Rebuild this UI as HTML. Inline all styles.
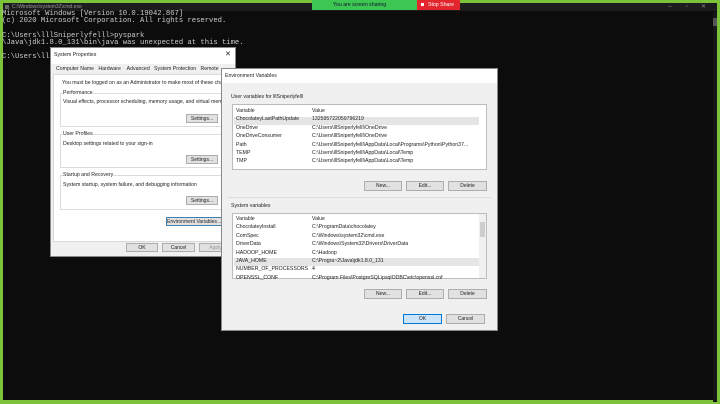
<!DOCTYPE html><html><head><style>
*{margin:0;padding:0;box-sizing:border-box}
body{width:720px;height:404px;overflow:hidden;background:#7cc23a;position:relative;font-family:"Liberation Sans",sans-serif}
.a{position:absolute}
.con{left:3px;top:3px;width:714px;height:397px;background:#0c0c0c}
.mono{font-family:"Liberation Mono",monospace;font-size:7.2px;color:#ccc;white-space:pre;line-height:7.2px}
.t{font-size:5.2px;color:#222;white-space:nowrap}
.btn{position:absolute;background:#e1e1e1;border:1px solid #adadad;font-size:5px;color:#222;text-align:center;white-space:nowrap;line-height:8px;overflow:hidden}
.box{position:absolute;border:1px solid #bcbcbc;background:#fff}
</style></head><body>
<div class="a con"></div>
<div class="a" style="left:3px;top:3px;width:714px;height:8px;background:#1d1d1d"></div>
<div class="a t" style="left:12px;top:4px;color:#999;font-size:5px">C:\Windows\system32\cmd.exe</div>
<div class="a" style="left:5px;top:5px;width:4px;height:4px;background:#666"></div>
<div class="a t" style="left:668px;top:3px;color:#888;font-size:6px">─&nbsp;&nbsp;&nbsp;&nbsp;&nbsp;&nbsp;&nbsp;&nbsp;▫&nbsp;&nbsp;&nbsp;&nbsp;&nbsp;&nbsp;&nbsp;&nbsp;✕</div>
<div class="a" style="left:312px;top:0;width:105px;height:10px;background:#3ec653"></div>
<div class="a t" style="left:333px;top:2px;color:#113;font-size:5.2px">You are screen sharing</div>
<div class="a" style="left:417px;top:0;width:43px;height:10px;background:#e3262e"></div>
<div class="a" style="left:421px;top:3px;width:3px;height:3px;background:#fff"></div>
<div class="a t" style="left:428px;top:2px;color:#fff;font-size:5.2px">Stop Share</div>
<div class="a" style="left:713px;top:12px;width:4px;height:390px;background:#171717"></div>
<div class="a" style="left:713px;top:18px;width:4px;height:8px;background:#555"></div>
<div class="a mono" style="left:2px;top:11px">Microsoft Windows [Version 10.0.19042.867]
(c) 2020 Microsoft Corporation. All rights reserved.

C:\Users\lllSniperlyfelll>pyspark
\Java\jdk1.8.0_131\bin\java was unexpected at this time.

C:\Users\lllSni</div>

<!-- system properties -->
<div class="a" style="left:50px;top:47px;width:186px;height:210px;background:#f0f0f0;border:1px solid #888"></div>
<div class="a" style="left:51px;top:48px;width:184px;height:16px;background:#fff"></div>
<div class="a t" style="left:54px;top:52px">System Properties</div>
<div class="a t" style="left:225px;top:50px;font-size:7px">✕</div>
<div class="a" style="left:53px;top:74px;width:182px;height:168px;background:#fff;border:1px solid #d9d9d9"></div>
<div class="a t" style="left:56px;top:66px;width:178px">Computer Name&nbsp;&nbsp;&nbsp;Hardware&nbsp;&nbsp;&nbsp;&nbsp;Advanced&nbsp;&nbsp;&nbsp;System Protection&nbsp;&nbsp;&nbsp;Remote</div>
<div class="a t" style="left:62px;top:80px">You must be logged on as an Administrator to make most of these changes</div>
<div class="a" style="left:60px;top:93px;width:174px;height:34px;border:1px solid #dcdcdc"></div>
<div class="a t" style="left:63px;top:90px;background:#fff">Performance</div>
<div class="a t" style="left:63px;top:99px">Visual effects, processor scheduling, memory usage, and virtual memory</div>
<div class="btn" style="left:186px;top:114px;width:32px;height:9px">Settings...</div>
<div class="a" style="left:60px;top:134px;width:174px;height:34px;border:1px solid #dcdcdc"></div>
<div class="a t" style="left:63px;top:131px;background:#fff">User Profiles</div>
<div class="a t" style="left:63px;top:141px">Desktop settings related to your sign-in</div>
<div class="btn" style="left:186px;top:155px;width:32px;height:9px">Settings...</div>
<div class="a" style="left:60px;top:175px;width:174px;height:35px;border:1px solid #dcdcdc"></div>
<div class="a t" style="left:63px;top:172px;background:#fff">Startup and Recovery</div>
<div class="a t" style="left:63px;top:182px">System startup, system failure, and debugging information</div>
<div class="btn" style="left:186px;top:196px;width:32px;height:9px">Settings...</div>
<div class="btn" style="left:166px;top:217px;width:56px;height:9px;border-color:#3c7fb1">Environment Variables...</div>
<div class="btn" style="left:126px;top:243px;width:32px;height:9px">OK</div>
<div class="btn" style="left:162px;top:243px;width:33px;height:9px">Cancel</div>
<div class="btn" style="left:199px;top:243px;width:33px;height:9px;color:#999">Apply</div>

<!-- env vars -->
<div class="a" style="left:221px;top:68px;width:277px;height:263px;background:#f0f0f0;border:1px solid #888"></div>
<div class="a" style="left:222px;top:69px;width:275px;height:14px;background:#fff"></div>
<div class="a t" style="left:225px;top:73px">Environment Variables</div>
<div class="a t" style="left:231px;top:94px">User variables for lllSniperlyfelll</div>
<div class="box" style="left:232px;top:104px;width:255px;height:66px"></div>
<div class="a" style="left:234px;top:117px;width:245px;height:8px;background:#e5e5e5"></div>
<div class="a t" style="left:236px;top:107px;line-height:8.4px">Variable<br>ChocolateyLastPathUpdate<br>OneDrive<br>OneDriveConsumer<br>Path<br>TEMP<br>TMP</div>
<div class="a t" style="left:312px;top:107px;line-height:8.4px">Value<br>132595722059796219<br>C:\Users\lllSniperlyfelll\OneDrive<br>C:\Users\lllSniperlyfelll\OneDrive<br>C:\Users\lllSniperlyfelll\AppData\Local\Programs\Python\Python37...<br>C:\Users\lllSniperlyfelll\AppData\Local\Temp<br>C:\Users\lllSniperlyfelll\AppData\Local\Temp</div>
<div class="btn" style="left:364px;top:181px;width:38px;height:10px">New...</div>
<div class="btn" style="left:406px;top:181px;width:38px;height:10px">Edit...</div>
<div class="btn" style="left:448px;top:181px;width:39px;height:10px">Delete</div>
<div class="a" style="left:228px;top:197px;width:263px;height:1px;background:#dcdcdc"></div>
<div class="a t" style="left:231px;top:203px">System variables</div>
<div class="box" style="left:232px;top:213px;width:255px;height:66px"></div>
<div class="a" style="left:479px;top:214px;width:7px;height:64px;background:#f0f0f0"></div>
<div class="a" style="left:480px;top:222px;width:5px;height:15px;background:#cdcdcd"></div>
<div class="a" style="left:234px;top:258px;width:245px;height:8px;background:#e5e5e5"></div>
<div class="a t" style="left:236px;top:215px;line-height:8.4px">Variable<br>ChocolateyInstall<br>ComSpec<br>DriverData<br>HADOOP_HOME<br>JAVA_HOME<br>NUMBER_OF_PROCESSORS<br>OPENSSL_CONF</div>
<div class="a t" style="left:312px;top:215px;line-height:8.4px">Value<br>C:\ProgramData\chocolatey<br>C:\Windows\system32\cmd.exe<br>C:\Windows\System32\Drivers\DriverData<br>C:\Hadoop<br>C:\Progra~2\Java\jdk1.8.0_131<br>4<br>C:\Program Files\PostgreSQL\psqlODBC\etc\openssl.cnf</div>
<div class="btn" style="left:364px;top:289px;width:38px;height:10px">New...</div>
<div class="btn" style="left:406px;top:289px;width:38px;height:10px">Edit...</div>
<div class="btn" style="left:448px;top:289px;width:39px;height:10px">Delete</div>
<div class="btn" style="left:403px;top:314px;width:39px;height:10px;background:#cce4f7;border-color:#0078d7">OK</div>
<div class="btn" style="left:446px;top:314px;width:39px;height:10px">Cancel</div>
</body></html>
